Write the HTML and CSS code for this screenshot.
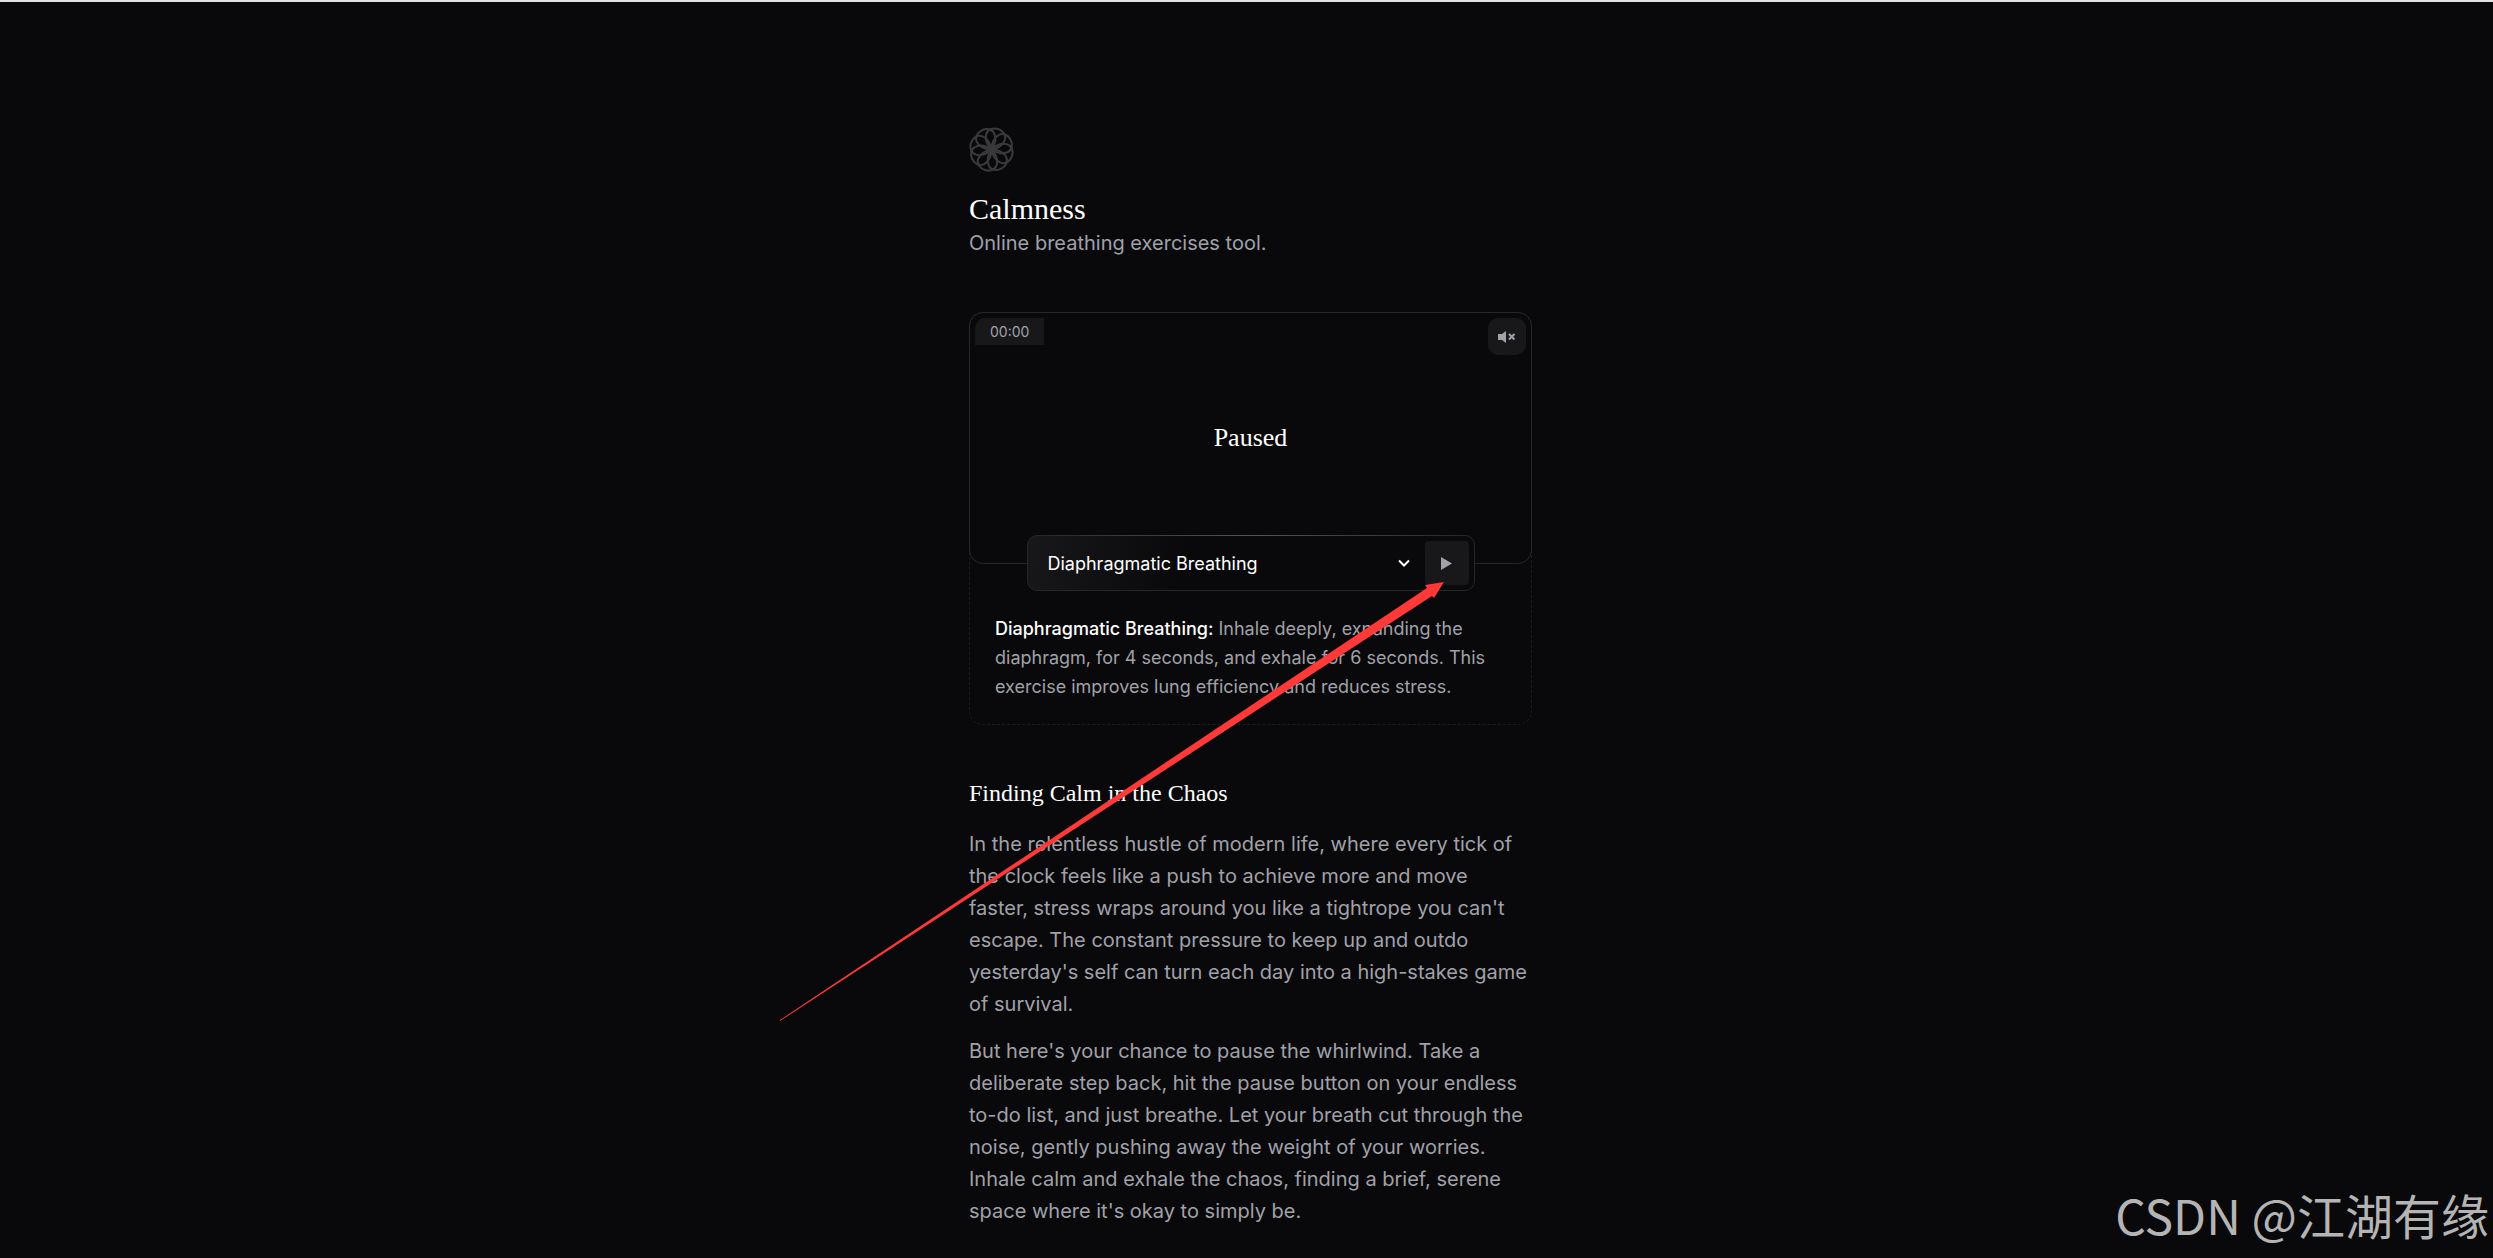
FILE: index.html
```html
<!DOCTYPE html>
<html lang="en">
<head>
    <meta charset="UTF-8">
    <meta name="viewport" content="width=device-width, initial-scale=1.0">
    <title>Calmness</title>
    <link rel="stylesheet" href="styles.css">
</head>
<body>

<main class="container">
    <header class="header">
        <svg class="logo" viewBox="-22 -22 44 44" aria-hidden="true">
            <defs>
                <path id="petal" d="M0 0C7 -4 9.500 -9 9.500 -13C9.500 -18 5 -21 0 -21C-5 -21 -9.500 -18 -9.500 -13C-9.500 -9 -7 -4 0 0Z"/>
            </defs>
            <g transform="rotate(18)">
                <use href="#petal"/>
                <use href="#petal" transform="rotate(45)"/>
                <use href="#petal" transform="rotate(90)"/>
                <use href="#petal" transform="rotate(135)"/>
                <use href="#petal" transform="rotate(180)"/>
                <use href="#petal" transform="rotate(225)"/>
                <use href="#petal" transform="rotate(270)"/>
                <use href="#petal" transform="rotate(315)"/>
            </g>
        </svg>
        <h1>Calmness</h1>
        <p>Online breathing exercises tool.</p>
    </header>

    <section class="card">
        <div class="panel">
            <div class="panel-top">
                <span class="timer">00:00</span>
                <button class="sound-btn" type="button" aria-label="Unmute">
                    <svg width="18" height="12" viewBox="0 0 18 12" aria-hidden="true">
                        <path class="fill" d="M0 3H4L8 0V12L4 9H0Z"/>
                        <path class="cross" d="M11 3L16.500 8.500M16.500 3L11 8.500"/>
                    </svg>
                </button>
            </div>
            <div class="status">Paused</div>
        </div>

        <div class="controls">
            <select class="exercise" aria-label="Exercise">
                <option>Diaphragmatic Breathing</option>
            </select>
            <svg class="chevron" width="12" height="8" viewBox="0 0 12 8" aria-hidden="true">
                <path d="M1 1.500L6 6.500L11 1.500"/>
            </svg>
            <button class="play-btn" type="button" aria-label="Play">
                <svg width="11" height="13" viewBox="0 0 11 13" aria-hidden="true">
                    <path class="fill" d="M0 0L11 6.500L0 13Z"/>
                </svg>
            </button>
        </div>

        <p class="description"><strong>Diaphragmatic Breathing:</strong> Inhale deeply, expanding the diaphragm, for 4 seconds, and exhale for 6 seconds. This exercise improves lung efficiency and reduces stress.</p>
    </section>

    <article class="about">
        <h2>Finding Calm in the Chaos</h2>
        <p>In the relentless hustle of modern life, where every tick of the clock feels like a push to achieve more and move faster, stress wraps around you like a tightrope you can't escape. The constant pressure to keep up and outdo yesterday's self can turn each day into a high-stakes game of survival.</p>
        <p>But here's your chance to pause the whirlwind. Take a deliberate step back, hit the pause button on your endless to-do list, and just breathe. Let your breath cut through the noise, gently pushing away the weight of your worries. Inhale calm and exhale the chaos, finding a brief, serene space where it's okay to simply be.</p>
    </article>

    <svg class="arrow" width="664" height="440" viewBox="0 0 664 440" aria-hidden="true">
        <path d="M0 438L647 6L645 3L664 0L654 16L652 14L0 439Z"/>
    </svg>
</main>

<div class="watermark">CSDN @江湖有缘</div>

</body>
</html>
```

FILE: styles.css
```css
* {
    box-sizing: border-box;
}
body {
    margin: 0;
    padding-left: 8px;
    min-height: 100vh;
    border-top: 2px solid #e4e4e4;
    background-color: #09090b;
    color: #a1a1aa;
    font-family: Inter, sans-serif;
    font-size: 20px;
    line-height: 32px;
}
h1, h2, p {
    margin: 0;
}
h1, h2, .status {
    color: white;
    font-family: "Liberation Serif", serif;
    font-weight: 400;
}
button {
    display: flex;
    align-items: center;
    justify-content: center;
    padding: 0;
    border: none;
    background-color: #18181b;
    cursor: pointer;
}
.container {
    position: relative;
    max-width: 563px;
    margin: 0 auto;
    padding-top: 125px;
}
.logo {
    display: block;
    width: 45px;
    height: 45px;
    fill: none;
    stroke: #3a3a3d;
    stroke-width: 2;
}
h1 {
    margin-top: 19px;
    font-size: 30px;
    line-height: 36px;
}
.card {
    margin-top: 53px;
    border: 1px dashed #1c1c1f;
    border-radius: 14px;
}
.panel {
    display: flex;
    flex-direction: column;
    height: 252px;
    margin: -1px -1px 0;
    padding: 5px;
    border: 1px solid #27272a;
    border-radius: 14px;
}
.panel-top {
    display: flex;
    align-items: flex-start;
    justify-content: space-between;
}
.timer {
    padding: 0 15px;
    border-radius: 10px 0 0 0;
    background-color: #18181b;
    font-size: 14px;
    line-height: 27px;
}
.sound-btn {
    width: 38px;
    height: 37px;
    border-radius: 10px;
}
.fill {
    fill: #a1a1aa;
}
.cross {
    stroke: #a1a1aa;
    stroke-width: 2;
}
.status {
    padding-top: 67px;
    font-size: 26px;
    line-height: 32px;
    text-align: center;
}
.controls {
    position: relative;
    display: flex;
    align-items: center;
    width: 448px;
    max-width: 100%;
    height: 56px;
    margin: -29px auto 0;
    padding: 5px;
    border: 1px solid #27272a;
    border-radius: 10px;
    background: linear-gradient(100deg, #18181b, #09090b 35%);
}
.controls::before {
    content: "";
    position: absolute;
    top: -1px;
    left: 10px;
    right: 10px;
    height: 1px;
    background: linear-gradient(90deg, transparent, #52525b, transparent);
}
.exercise {
    flex: 1;
    height: 44px;
    padding: 0 15px;
    border: none;
    background: transparent;
    color: white;
    font-family: inherit;
    font-size: 18px;
    appearance: none;
}
.chevron {
    margin-right: 15px;
    fill: none;
    stroke: white;
    stroke-width: 2;
}
.play-btn {
    width: 44px;
    height: 44px;
    border-radius: 4px;
}
.description {
    padding: 23px 25px;
    font-size: 18px;
    line-height: 29px;
}
.description strong {
    color: white;
    font-weight: 500;
}
.about {
    margin-top: 52px;
}
h2 {
    padding-bottom: 4px;
    font-size: 24px;
    line-height: 32px;
}
.about p {
    margin-top: 15px;
}
.arrow {
    position: absolute;
    top: 580px;
    left: -189px;
    fill: #ff3838;
}
.watermark {
    position: absolute;
    right: 4px;
    bottom: 12px;
    color: #b4b4b4;
    font-family: "Noto Sans CJK SC", sans-serif;
    font-size: 48px;
    font-weight: 400;
    line-height: 64px;
}
```
